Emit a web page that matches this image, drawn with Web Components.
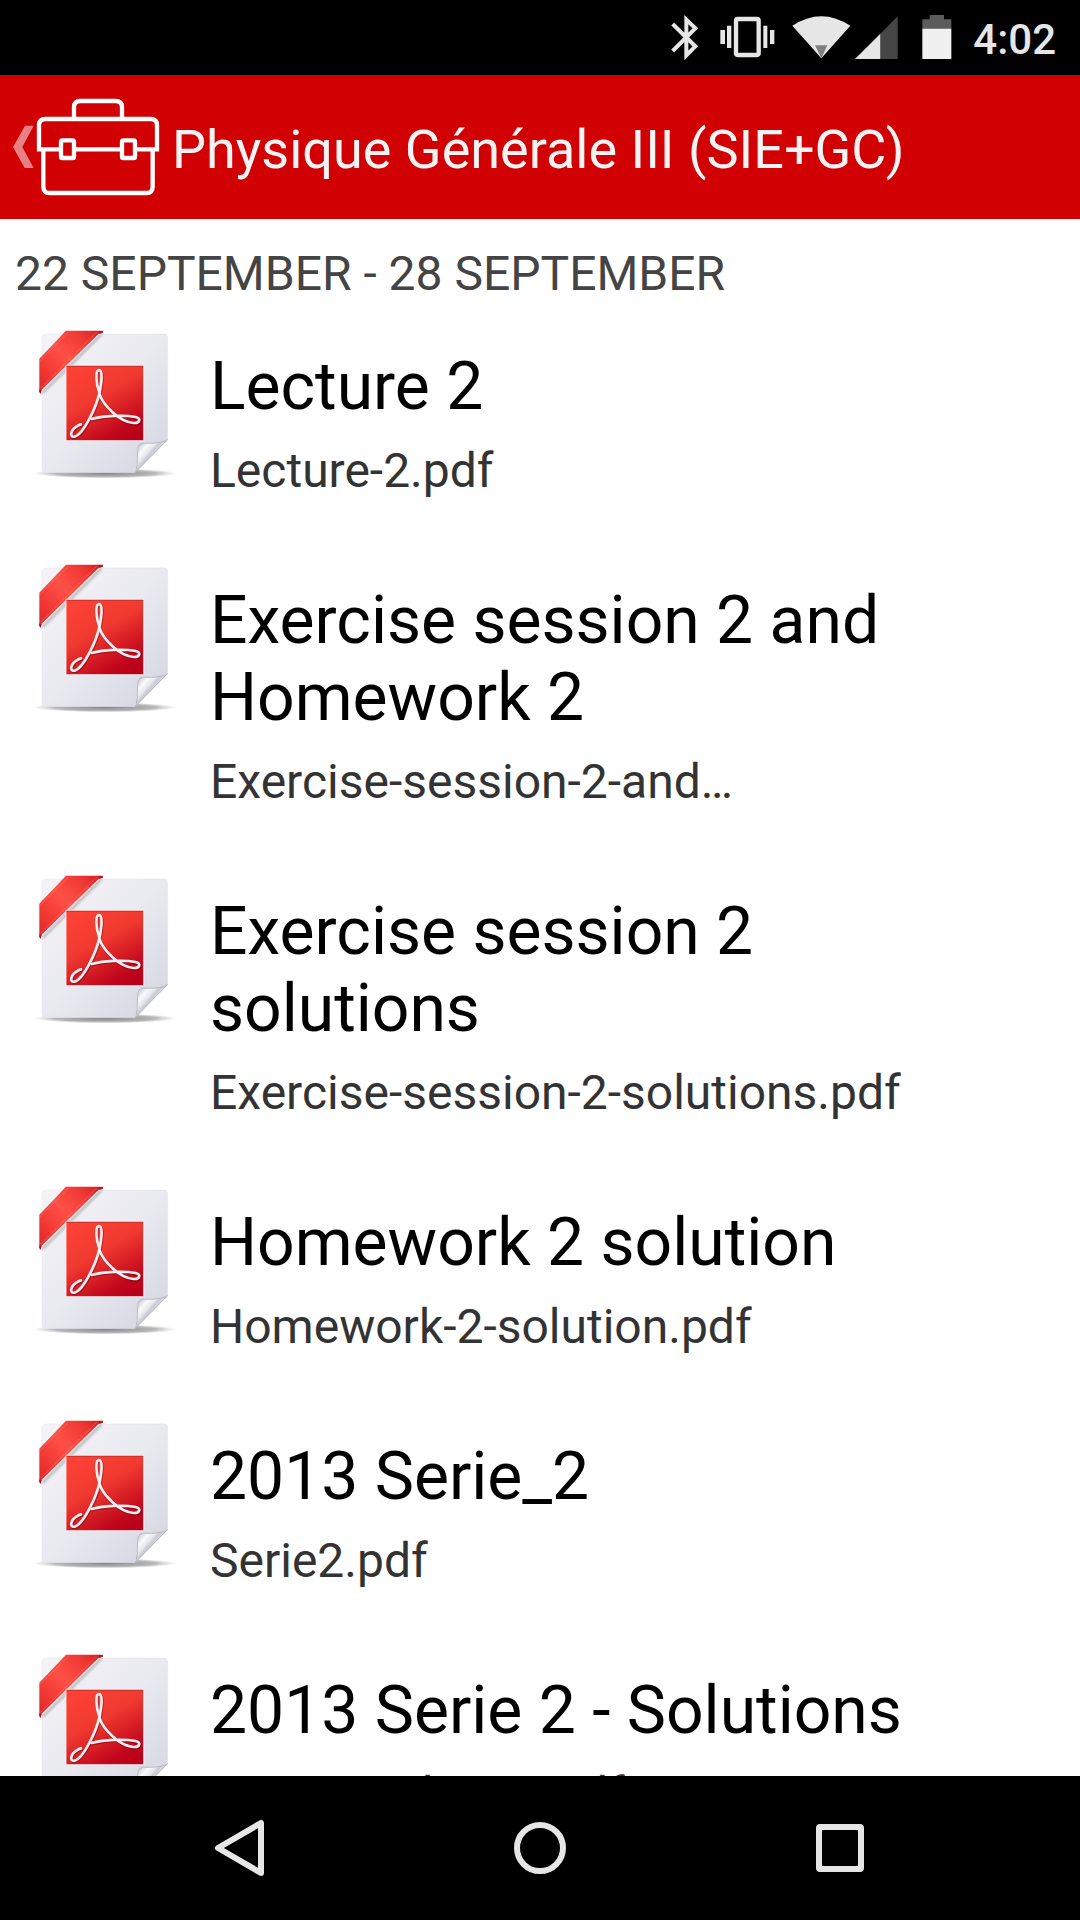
<!DOCTYPE html>
<html lang="en">
<head>
<meta charset="utf-8">
<meta name="viewport" content="width=device-width, initial-scale=1">
<title>Physique Générale III (SIE+GC)</title>
<style>
  html, body { margin: 0; height: 100%; }
  body { font-family: Roboto, "Noto Sans", sans-serif; background: #fff; color: #000; }
</style>
</head>
<body>
<course-app>
  <status-bar slot="status">4:02</status-bar>
  <app-header slot="header">Physique Générale III (SIE+GC)</app-header>
  <file-section>
    <span slot="heading">22 SEPTEMBER - 28 SEPTEMBER</span>
    <file-item file="Lecture-2.pdf">Lecture 2</file-item>
    <file-item file="Exercise-session-2-and…">Exercise session 2 and Homework 2</file-item>
    <file-item file="Exercise-session-2-solutions.pdf">Exercise session 2 solutions</file-item>
    <file-item file="Homework-2-solution.pdf">Homework 2 solution</file-item>
    <file-item file="Serie2.pdf">2013 Serie_2</file-item>
    <file-item file="Serie2_Solution.pdf">2013 Serie 2 - Solutions</file-item>
  </file-section>
  <nav-bar slot="nav"></nav-bar>
</course-app>

<template id="course-app">
  <style>
    :host { display: flex; flex-direction: column; height: 100vh; }
    main { flex: 1; min-height: 0; overflow-y: auto; scrollbar-width: none; background: #fff; }
  </style>
  <slot name="status"></slot>
  <slot name="header"></slot>
  <main><slot></slot></main>
  <slot name="nav"></slot>
</template>

<template id="status-bar">
  <style>
    :host { display: flex; align-items: center; justify-content: flex-end; height: 75px; flex: none;
            padding-right: 24px; box-sizing: border-box; background: #000; color: #e6e6e6;
            font-size: 42px; font-weight: 500; line-height: 50px; }
    svg { height: 47px; display: block; flex: none; }
    .bt { width: 28px; margin-right: 21px; }
    .vib { width: 55px; margin-right: 17px; }
    .wifi { width: 59px; margin-right: 4px; }
    .cell { width: 43px; margin-right: 24px; }
    .bat { width: 30px; margin-right: 21px; }
    .time { padding-top: 4px; }
  </style>
  <svg class="bt" viewBox="91 42 84 141" aria-hidden="true"><path d="M96 72 L164 139 L137 166 V59 L164 85 L96 153" fill="none" stroke="#e6e6e6" stroke-width="12"/></svg>
  <svg class="vib" viewBox="239 42 165 141" aria-hidden="true"><rect x="287" y="57" width="68" height="108" rx="5" fill="none" stroke="#e6e6e6" stroke-width="13"/><path d="M240 90h14v42h-14zM260 77h13v67h-13zM369 77h12v67h-12zM389 90h13v42h-13z" fill="#e6e6e6"/></svg>
  <svg class="wifi" viewBox="455 42 177 141" aria-hidden="true"><path d="M456 77Q543 20 630 77L543 175Z" fill="#e6e6e6"/><path d="M524 136H561L543 175Z" fill="#808080"/></svg>
  <svg class="cell" viewBox="646 42 129 141" aria-hidden="true"><path d="M774 49V177H722V101Z" fill="#464646"/><path d="M646 177L722 101V177Z" fill="#e6e6e6"/></svg>
  <svg class="bat" viewBox="848 42 90 141" aria-hidden="true"><path d="M849 58H871V45H914V58H936V86H849Z" fill="#5c5c5c"/><path d="M849 86H936V177H849Z" fill="#f0f0f0"/></svg>
  <span class="time"><slot></slot></span>
</template>

<template id="app-header">
  <style>
    :host { display: flex; align-items: center; height: 144px; flex: none; gap: 12px;
            padding: 0 12px; box-sizing: border-box; background: #d00003; color: #f3f3f3; }
    button { border: 0; padding: 0; margin: 0; background: none; display: block; flex: none; }
    svg { display: block; width: 148px; height: 98px; }
    h1 { margin: 0; padding-top: 5px; font-size: 54px; line-height: 63px; font-weight: 400;
         white-space: nowrap; overflow: hidden; text-overflow: ellipsis; }
  </style>
  <button type="button" aria-label="Back">
    <svg viewBox="36 84 444 294">
      <path d="M75 167H101L67 231L101 294H74L39 231Z" fill="#e98083"/>
      <g fill="none" stroke="#fff" stroke-width="13">
        <path d="M222 143V112Q222 93 241 93H347Q366 93 366 112V143"/>
        <path d="M178 238H117V166Q117 147 136 147H452Q471 147 471 166V238H411M228 238H361"/>
        <path d="M130 243V350Q130 369 149 369H439Q458 369 458 350V243"/>
        <rect x="183" y="211" width="39" height="53" rx="4"/>
        <rect x="366" y="211" width="39" height="53" rx="4"/>
      </g>
    </svg>
  </button>
  <h1><slot></slot></h1>
</template>

<template id="file-section">
  <style>
    :host { display: block; }
    h2 { margin: 0; padding: 27px 15px 23px; font-size: 48px; line-height: 56px; font-weight: 400; color: #444; }
  </style>
  <h2><slot name="heading"></slot></h2>
  <slot></slot>
</template>

<template id="file-item">
  <style>
    :host { display: block; }
    a { display: flex; align-items: flex-start; gap: 30px; padding: 0 60px 0 30px; color: inherit; text-decoration: none; }
    svg { display: block; flex: none; width: 150px; height: 155px; }
    .text { flex: 1; min-width: 0; display: flex; flex-direction: column; gap: 18px; padding: 23px 0 60px; }
    .title { font-size: 66px; line-height: 77px; color: #000; }
    .file { font-size: 48px; line-height: 56px; color: #333; white-space: nowrap; overflow: hidden; text-overflow: ellipsis; }
  </style>
  <a href="#">
    <svg viewBox="30 45 450 465" aria-hidden="true">
      <defs>
        <linearGradient id="paper" x1="0" y1="0" x2="1" y2="1"><stop offset="0" stop-color="#f4f4f8"/><stop offset=".5" stop-color="#e9e9f0"/><stop offset="1" stop-color="#d3d4e0"/></linearGradient>
        <linearGradient id="red" x1=".2" y1="0" x2=".8" y2="1"><stop offset="0" stop-color="#fd4135"/><stop offset=".4" stop-color="#f03a30"/><stop offset=".85" stop-color="#c1071c"/><stop offset="1" stop-color="#b80018"/></linearGradient>
        <linearGradient id="ribbon" gradientUnits="userSpaceOnUse" x1="50" y1="240" x2="240" y2="52"><stop offset="0" stop-color="#d8262a"/><stop offset=".2" stop-color="#f03531"/><stop offset=".5" stop-color="#ff5046"/><stop offset=".8" stop-color="#ee3733"/><stop offset="1" stop-color="#cc1a20"/></linearGradient>
        <linearGradient id="curl" gradientUnits="userSpaceOnUse" x1="352" y1="408" x2="398" y2="448"><stop offset="0" stop-color="#c9cad2"/><stop offset=".35" stop-color="#fafafc"/><stop offset=".6" stop-color="#e6e6ec"/><stop offset=".75" stop-color="#c8c9d3"/><stop offset="1" stop-color="#ededf2"/></linearGradient>
        <radialGradient id="shade"><stop offset="0" stop-color="#777" stop-opacity=".9"/><stop offset=".7" stop-color="#888" stop-opacity=".6"/><stop offset="1" stop-color="#aaa" stop-opacity="0"/></radialGradient>
        <filter id="soft" x="-20%" y="-20%" width="140%" height="140%"><feGaussianBlur stdDeviation="3"/></filter>
      </defs>
      <ellipse cx="255" cy="490" rx="216" ry="15" fill="url(#shade)"/>
      <path d="M78 72H432Q443 72 443 83V390L345 488H78Q66 488 66 476V83Q66 72 78 72Z" fill="url(#paper)" stroke="#dcdde4" stroke-width="1"/>
      <path d="M66 246L240 73L248 74L70 251Z" fill="#777" opacity=".5" filter="url(#soft)"/>
      <path d="M138 62H248V68L236 71L64 240L62 251L58 246V146Z" fill="url(#ribbon)"/>
      <path d="M60 152L146 66M62 234L230 66" fill="none" stroke="#ffa29c" stroke-width="2" stroke-dasharray="4 2" opacity=".65"/>
      <path d="M58 238V246L62 251L65 240ZM238 63H248V69L236 71Z" fill="#b5121b"/>
      <rect x="138" y="166" width="233" height="226" fill="url(#red)" stroke="#fff" stroke-opacity=".75" stroke-width="3"/>
      <path d="M140 169H370" stroke="#b72828" stroke-width="2"/>
      <g fill="none" stroke-linecap="round" stroke-linejoin="round">
        <path d="M238 248C229 222 224 181 237 180C250 181 244 221 238 251C228 292 191 373 164 380C148 383 151 362 169 350Q175 345 183 343M238 251C249 285 298 336 341 339C360 340 364 324 347 321C310 314 252 317 215 327" stroke="#5c0008" stroke-opacity=".35" stroke-width="10" transform="translate(2 3)"/>
        <path d="M238 248C229 222 224 181 237 180C250 181 244 221 238 251C228 292 191 373 164 380C148 383 151 362 169 350Q175 345 183 343" stroke="#f3eef1" stroke-width="8"/>
        <path d="M238 251C249 285 298 336 341 339C360 340 364 324 347 321C310 314 252 317 215 327" stroke="#f3eef1" stroke-width="8"/>
      </g>
      <path d="M443 388L345 488C352 468 350 437 354 412Q357 400 371 399C398 401 426 399 443 388Z" fill="url(#curl)"/>
      <path d="M443 388L345 488" stroke="#a4a5ad" stroke-width="2"/>
      <path d="M349 478C354 459 351 432 354 412Q357 400 371 399C398 401 426 399 441 390" fill="none" stroke="#b7b8c2" stroke-width="3"/>
    </svg>
    <span class="text">
      <span class="title"><slot></slot></span>
      <span class="file"></span>
    </span>
  </a>
</template>

<template id="nav-bar">
  <style>
    :host { display: flex; height: 144px; flex: none; padding: 0 90px; background: #000; box-sizing: border-box; }
    button { flex: 1; border: 0; padding: 0; margin: 0; background: none; display: flex; align-items: center; justify-content: center; }
    svg { width: 60px; height: 60px; fill: none; stroke: #e6e6e6; stroke-width: 6; stroke-linejoin: round; }
  </style>
  <button type="button" aria-label="Back"><svg viewBox="0 0 60 60"><path d="M51 5V55L8 30Z"/></svg></button>
  <button type="button" aria-label="Home"><svg viewBox="0 0 60 60"><circle cx="30" cy="30" r="23"/></svg></button>
  <button type="button" aria-label="Recent apps"><svg viewBox="0 0 60 60"><rect x="9" y="9" width="42" height="42" rx="1"/></svg></button>
</template>

<script>
  class TemplateElement extends HTMLElement {
    constructor() {
      super();
      const template = document.getElementById(this.localName);
      this.attachShadow({ mode: "open" }).append(template.content.cloneNode(true));
    }
  }
  class CourseApp extends TemplateElement {}
  class StatusBar extends TemplateElement {}
  class AppHeader extends TemplateElement {}
  class FileSection extends TemplateElement {}
  class NavBar extends TemplateElement {}
  class FileItem extends TemplateElement {
    connectedCallback() {
      this.shadowRoot.querySelector(".file").textContent = this.getAttribute("file");
    }
  }
  customElements.define("course-app", CourseApp);
  customElements.define("status-bar", StatusBar);
  customElements.define("app-header", AppHeader);
  customElements.define("file-section", FileSection);
  customElements.define("file-item", FileItem);
  customElements.define("nav-bar", NavBar);
</script>
</body>
</html>
